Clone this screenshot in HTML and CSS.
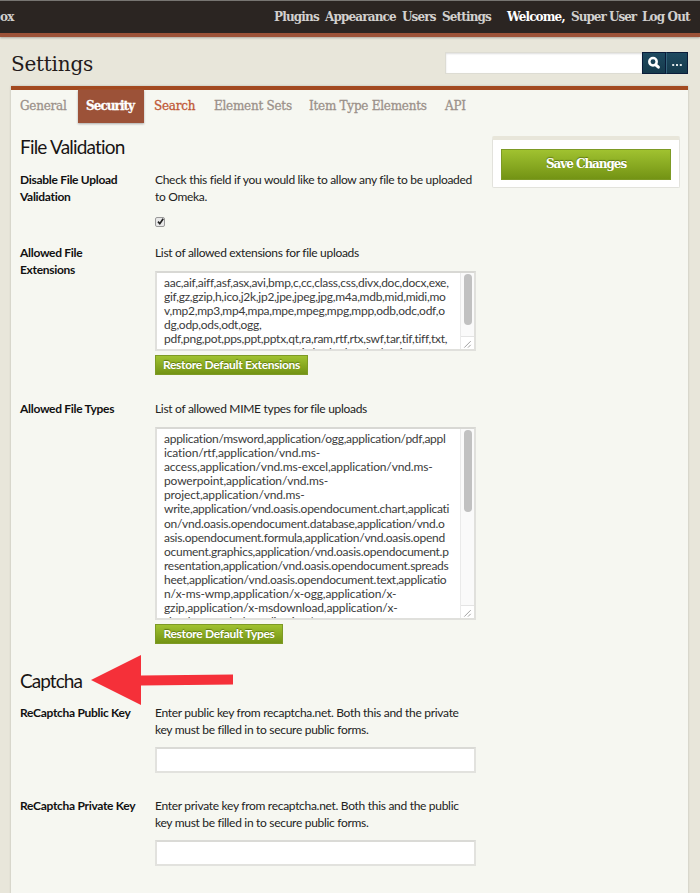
FILE: index.html
```html
<!DOCTYPE html>
<html lang="en">
<head>
<meta charset="utf-8">
<title>Settings</title>
<link rel="stylesheet" href="styles.css">
</head>
<body>
<header class="topbar">
  <span class="site">ox</span>
  <nav class="mainnav"><a class="n1">Plugins</a><a class="n2">Appearance</a><a class="n3">Users</a><a class="n4">Settings</a></nav>
  <div class="account"><span class="welcome">Welcome,</span><a class="n5">Super User</a><a class="n6">Log Out</a></div>
</header>
<main class="page">
  <div class="title">
    <h1>Settings</h1>
    <form class="search">
      <span class="query"></span>
      <span class="sbtn"><svg width="14" height="14" viewBox="0 0 14 14"><circle cx="6" cy="5.8" r="3.7" fill="none" stroke="#fff" stroke-width="2.5"/><path d="M8.8 8.8L11.4 11.2" stroke="#fff" stroke-width="3" stroke-linecap="round"/></svg></span>
      <span class="sbtn dots"><svg width="12" height="14" viewBox="0 0 12 14"><path d="M1.2 8h2v2h-2zM5 8h2v2H5zM8.8 8h2v2h-2z" fill="#dfe6e8"/></svg></span>
    </form>
  </div>
  <section class="panel">
    <nav class="tabs"><a class="t1">General</a><a class="t2 active">Security</a><a class="t3">Search</a><a class="t4">Element Sets</a><a class="t5">Item Type Elements</a><a class="t6">API</a></nav>
    <div class="columns">
      <div class="fields">
        <h2>File Validation</h2>
        <div class="field r1">
          <div class="label">Disable File Upload<br>Validation</div>
          <div class="control"><p>Check this field if you would like to allow any file to be uploaded<br>to Omeka.</p>
            <span class="check"><svg width="9" height="9" viewBox="0 0 9 9"><path d="M2 4.6L3.8 6.7L7.2 1.8" fill="none" stroke="#222" stroke-width="1.7"/></svg></span>
          </div>
        </div>
        <div class="field r2">
          <div class="label">Allowed File<br>Extensions</div>
          <div class="control"><p>List of allowed extensions for file uploads</p>
            <div class="area small"><div class="text">aac,aif,aiff,asf,asx,avi,bmp,c,cc,class,css,divx,doc,docx,exe,
gif,gz,gzip,h,ico,j2k,jp2,jpe,jpeg,jpg,m4a,mdb,mid,midi,mo
v,mp2,mp3,mp4,mpa,mpe,mpeg,mpg,mpp,odb,odc,odf,o
dg,odp,ods,odt,ogg,
pdf,png,pot,pps,ppt,pptx,qt,ra,ram,rtf,rtx,swf,tar,tif,tiff,txt,
wav,wax,wma,wmv,wmx,wri,xla,xls,xlsx,xlt,xlw,zip,m4v</div>
              <div class="rail"><span class="thumb"></span><svg class="grip" width="13" height="13" viewBox="0 0 13 13"><path d="M3 11.5L10 4.5M7 11.5L10 8.5" stroke="#999" fill="none"/></svg></div></div>
            <button class="green b1">Restore Default Extensions</button>
          </div>
        </div>
        <div class="field r3">
          <div class="label">Allowed File Types</div>
          <div class="control"><p>List of allowed MIME types for file uploads</p>
            <div class="area large"><div class="text">application/msword,application/ogg,application/pdf,appl
<span class="loose">ication/rtf,application/vnd.ms-
access,application/vnd.ms-excel,application/vnd.ms-
powerpoint,application/vnd.ms-
project,application/vnd.ms-</span>
write,application/vnd.oasis.opendocument.chart,applicati
on/vnd.oasis.opendocument.database,application/vnd.o
asis.opendocument.formula,application/vnd.oasis.opend
ocument.graphics,application/vnd.oasis.opendocument.p
resentation,application/vnd.oasis.opendocument.spreads
heet,application/vnd.oasis.opendocument.text,applicatio
<span class="loose">n/x-ms-wmp,application/x-ogg,application/x-
gzip,application/x-msdownload,application/x-
shockwave-flash,application/x-</span></div>
              <div class="rail"><span class="thumb"></span><svg class="grip" width="13" height="13" viewBox="0 0 13 13"><path d="M3 11.5L10 4.5M7 11.5L10 8.5" stroke="#999" fill="none"/></svg></div></div>
            <button class="green b2">Restore Default Types</button>
          </div>
        </div>
        <div class="captcha"><h2>Captcha</h2><svg class="arrow" width="143" height="51" viewBox="0 0 143 51"><path d="M0 25L50 0V20.5L142 19.5V29.5L50 30.5V50Z" fill="#f53039"/></svg></div>
        <div class="field r4">
          <div class="label">ReCaptcha Public Key</div>
          <div class="control"><p>Enter public key from recaptcha.net. Both this and the private<br>key must be filled in to secure public forms.</p><span class="input"></span></div>
        </div>
        <div class="field r5">
          <div class="label">ReCaptcha Private Key</div>
          <div class="control"><p>Enter private key from recaptcha.net. Both this and the public<br>key must be filled in to secure public forms.</p><span class="input"></span></div>
        </div>
      </div>
      <aside class="save"><button class="green">Save Changes</button></aside>
    </div>
  </section>
</main>
</body>
</html>
```
FILE: styles.css
```css
* { box-sizing: border-box; }
body { margin: 0; height: 893px; overflow: hidden; background: #e8e6da; font: 12px/17px Lato, sans-serif; color: #222; }
h1, h2, p { margin: 0; font-weight: normal; }
.topbar { height: 37px; border-top: 1px solid #777572; border-bottom: 4px solid #9c5238; background: #2b2522; display: flex; align-items: flex-start; font: bold 12px/32px "DejaVu Serif", serif; letter-spacing: -0.85px; color: #d2d0ce; box-shadow: 0 1px 2px #aaa89e; white-space: nowrap; }
.site { width: 274px; }
.mainnav, .account { display: flex; }
.n1 { width: 51px; }
.n2 { width: 77px; }
.n3 { width: 40px; }
.n4 { width: 65px; }
.site, .mainnav a, .account > * { flex: none; }
.welcome { width: 64px; color: #fff; }
.n5 { width: 71px; letter-spacing: -1px; }
.page { padding: 0 12px 0 11px; }
.title { height: 49px; display: flex; justify-content: space-between; }
h1 { font: 20px/54px "DejaVu Serif", serif; letter-spacing: -0.25px; color: #231a1a; }
.search { display: flex; margin: 15px 0 0; height: 22px; }
.query { width: 197px; background: #fff; border: 1px solid #dddcd3; border-right: 0; box-shadow: inset 0 1px 2px #ddd; }
.sbtn { width: 24px; background: linear-gradient(#1e4a60, #163a4c); border: 1px solid #0a1c3a; display: flex; align-items: center; justify-content: center; }
.dots { width: 22px; border-left-color: #35647b; }
.panel { height: 810px; background: #f6f7f1; border-top: 4px solid #a34a20; box-shadow: 0 0 2px #b9b7ae; }
.tabs { display: flex; height: 33px; font: 12px/32px "DejaVu Serif", serif; letter-spacing: -0.25px; color: #9b918a; white-space: nowrap; -webkit-text-stroke: 0.3px; }
.t1 { width: 67px; padding-left: 9px; }
.t2 { width: 66px; padding-left: 8px; }
.active { background: #9c5238; color: #fff; box-shadow: 0 1px 2px #aaa; font-weight: bold; letter-spacing: -0.95px; }
.t3 { width: 70px; padding-left: 10px; color: #c05836; }
.t4 { width: 95px; }
.t5 { width: 136px; }
.columns { display: flex; justify-content: space-between; padding: 0 8px 0 9px; }
.fields { width: 456px; }
h2 { font: 19px/24px Lato, sans-serif; letter-spacing: -0.8px; color: #181414; }
.fields > h2 { margin-top: 12px; height: 36px; }
.field { display: grid; grid-template-columns: 135px 321px; white-space: nowrap; }
.label { font-weight: bold; letter-spacing: -0.3px; color: #111; }
p { letter-spacing: -0.3px; }
.r1 { height: 73px; }
.r2 { height: 156px; }
.r3 { height: 269px; }
.r4 { height: 93px; }
.check { display: block; width: 10px; height: 10px; margin-top: 12px; border: 1px solid #999; border-radius: 2px; background: #e8e8e8; line-height: 0; }
.check svg { margin: -1px 0 0; }
.area { margin-top: 10px; border: 2px solid #e0e0dc; border-top-color: #d8d8d4; background: #fff; display: flex; justify-content: space-between; overflow: hidden; }
.small { height: 80px; }
.large { height: 193px; }
.text { padding: 3px 0 0 7px; font-size: 12px; line-height: 14.1px; letter-spacing: -0.27px; white-space: pre; color: #3b3b3b; overflow: hidden; width: 304px; }
.loose { letter-spacing: -0.14px; }
.rail { flex: none; width: 14px; background: #fafafa; border-left: 1px solid #eaeaea; display: flex; flex-direction: column; justify-content: space-between; align-items: center; }
.thumb { width: 8px; height: 51px; margin-top: 1px; border-radius: 4px; background: #c1c1c1; }
.large .thumb { height: 82px; }
.grip { background: #fff; border-top: 1px solid #e4e4e4; }
.green { display: block; border: 1px solid #7d9a25; background: linear-gradient(#a0c230, #739314); color: #fff; text-shadow: 0 -1px 1px #5c7612; padding: 0; white-space: nowrap; }
.b1, .b2 { margin-top: 4px; height: 20px; font: bold 12px/18px Lato, sans-serif; letter-spacing: -0.3px; }
.b1 { width: 153px; }
.b2 { width: 128px; }
.captcha { display: flex; height: 35px; gap: 11px; }
.captcha h2 { width: 60px; letter-spacing: -0.95px; }
.arrow { margin-top: -14px; flex: none; }
.input { display: block; margin-top: 9px; height: 26px; border: 2px solid #e2e2de; border-top-color: #dadad6; background: #fff; }
.save { width: 188px; height: 52px; margin-top: 13px; padding: 9px 9px 0; background: #fff; border: 1px solid #e2e2dc; border-top: 4px solid #e8e6da; border-radius: 2px; }
.save .green { width: 170px; height: 31px; margin-left: -1px; font: bold 12px/27px "DejaVu Serif", serif; letter-spacing: -1.05px; }
```
